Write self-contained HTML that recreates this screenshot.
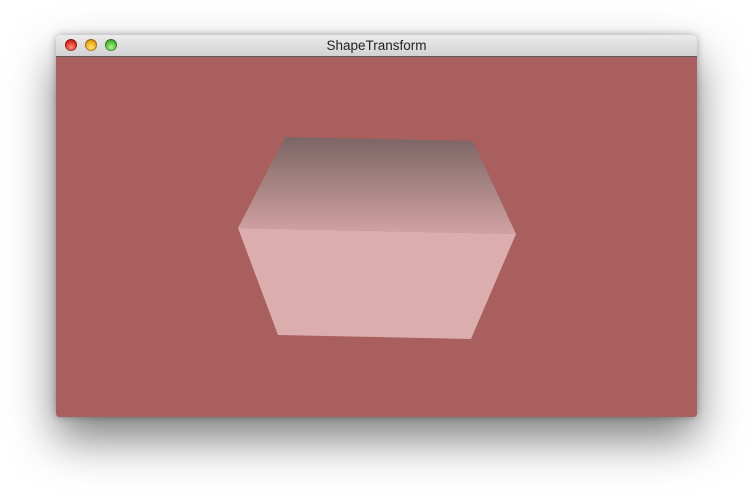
<!DOCTYPE html>
<html><head><style>
html,body{margin:0;padding:0;background:#fff;width:754px;height:496px;overflow:hidden}
.win{position:absolute;left:56px;top:35px;width:641px;height:382px;border-radius:5px 5px 3px 3px;overflow:hidden;box-shadow:0 22px 45px rgba(0,0,0,0.5),0 0 8px rgba(0,0,0,0.3)}
.tb{height:21px;background:linear-gradient(#ececec,#d2d2d2);border-bottom:1px solid #5a5a5a;position:relative;font:13.5px "Liberation Sans",sans-serif;color:#222;text-align:center;line-height:22px}
.b{position:absolute;top:4px;width:12px;height:12px;border-radius:50%;box-shadow:inset 0 0 0 1px rgba(0,0,0,0.3)}
.c{position:absolute;top:22px;left:0;width:641px;height:360px;background:#a85f5e}
</style></head><body>
<div class="win">
<div class="tb">ShapeTransform
<div class="b" style="left:9px;background:radial-gradient(circle at 50% 70%,#ff8a80,#d8271e 60%,#9e1010)"></div>
<div class="b" style="left:29px;background:radial-gradient(circle at 50% 70%,#ffe07a,#e8a415 60%,#a86a05)"></div>
<div class="b" style="left:49px;background:radial-gradient(circle at 50% 70%,#b0f08a,#4cb832 60%,#2c7a18)"></div>
</div>
<div class="c"></div>
</div>
<svg width="754" height="496" style="position:absolute;left:0;top:0">
<defs><linearGradient id="g" x1="0" y1="137" x2="0" y2="234" gradientUnits="userSpaceOnUse">
<stop offset="0" stop-color="#7c6565"/><stop offset="1" stop-color="#d2a2a2"/></linearGradient></defs>
<polygon points="285,137 473,141 516,234 238,228" fill="url(#g)"/>
<polygon points="238,228 516,234 471,339 278,335" fill="#dbadad"/>
</svg>
</body></html>
